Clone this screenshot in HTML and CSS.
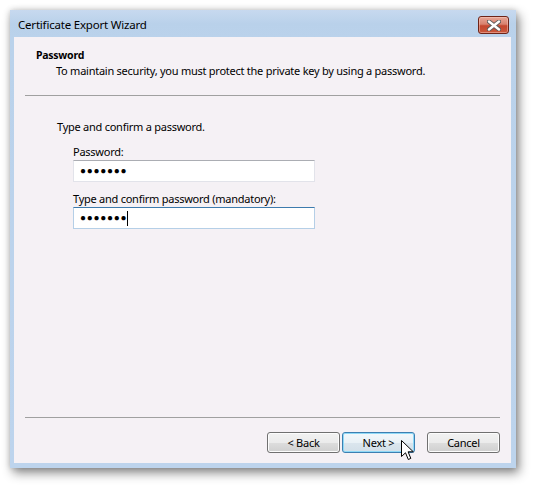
FILE: index.html
```html
<!DOCTYPE html>
<html lang="en">
<head>
<meta charset="utf-8">
<title>Certificate Export Wizard</title>
<link rel="stylesheet" href="styles.css">
</head>
<body>
<div class="window">
  <div class="titlebar">
    <span class="title">Certificate Export Wizard</span>
    <div class="close">
      <svg width="14" height="11" viewBox="0 0 14 11">
        <path d="M2 1.5 L12 9.5 M12 1.5 L2 9.5" stroke="#5b5b5b" stroke-width="4.2" stroke-linecap="round"/>
        <path d="M2 1.5 L12 9.5 M12 1.5 L2 9.5" stroke="#ffffff" stroke-width="2.4" stroke-linecap="round"/>
      </svg>
    </div>
  </div>
  <div class="client">
    <div class="header">
      <div class="head-title">Password</div>
      <div class="head-sub">To maintain security, you must protect the private key by using a password.</div>
    </div>
    <div class="sep"></div>
    <div class="body">
      <div class="intro">Type and confirm a password.</div>
      <div class="field">
        <div class="label">Password:</div>
        <div class="input"><span class="dots">●●●●●●●</span></div>
      </div>
      <div class="field">
        <div class="label">Type and confirm password (mandatory):</div>
        <div class="input focused"><span class="dots">●●●●●●●</span><span class="caret"></span></div>
      </div>
    </div>
    <div class="sep"></div>
    <div class="buttons">
      <div class="btn">&lt; Back</div>
      <div class="btn default">Next &gt;
        <svg class="cursor" width="13" height="21" viewBox="0 0 13 21">
          <path d="M0.5 0.5 L0.5 16.5 L4.5 12.8 L7.3 19.5 L9.8 18.4 L7.1 11.8 L12.3 11.8 Z" fill="#ffffff" stroke="#000000" stroke-width="1" stroke-linejoin="miter"/>
        </svg>
      </div>
      <div class="btn cancel">Cancel</div>
    </div>
  </div>
</div>
</body>
</html>
```

FILE: styles.css
```css
html, body {
  margin: 0;
  padding: 0;
  background: #ffffff;
}

body {
  width: 534px;
  height: 487px;
  overflow: hidden;
  font-family: "Segoe UI", "Noto Sans", "Open Sans", sans-serif;
  font-size: 11px;
  letter-spacing: -0.25px;
  line-height: 16px;
  color: #000000;
}

.window {
  margin: 10px 0 0 10px;
  width: 506px;
  height: 458px;
  box-sizing: border-box;
  display: flex;
  flex-direction: column;
  padding: 0 5px 5px 4px;
  background: linear-gradient(#c7d9ef 0px, #b9d1ea 14px, #bad2eb 27px, #bdd4ed 100%);
  box-shadow: 3px 5px 10px rgba(0, 0, 0, 0.45), 0 0 6px rgba(0, 0, 0, 0.18);
}

.titlebar {
  height: 27px;
  display: flex;
  align-items: flex-start;
  justify-content: space-between;
}

.title {
  margin: 7px 0 0 4px;
  line-height: 16px;
  font-size: 11.5px;
  letter-spacing: -0.2px;
}

.close {
  margin: 6px 2px 0 0;
  width: 31px;
  height: 18px;
  box-sizing: border-box;
  border: 1px solid #6e2418;
  border-radius: 3px;
  background: linear-gradient(#e7a696 0%, #d8826f 45%, #c4472f 55%, #c9573c 100%);
  box-shadow: inset 0 0 0 1px rgba(255, 210, 200, 0.45);
  display: flex;
  align-items: center;
  justify-content: center;
}

.close svg {
  display: block;
}

.client {
  flex: 1;
  background: #f5f1f5;
  display: flex;
  flex-direction: column;
}

.header {
  padding: 10px 0 0 22px;
  height: 58px;
  box-sizing: border-box;
}

.head-title {
  font-weight: bold;
  font-size: 10.5px;
}

.head-sub {
  padding-left: 20px;
}

.sep {
  margin: 0 11px;
  height: 1px;
  background: #a0a0a0;
}

.body {
  flex: 1;
  padding: 23px 0 0 43px;
}

.intro {
  margin-bottom: 9px;
}

.field {
  padding-left: 16px;
  margin-bottom: 9px;
}

.label {
  height: 16px;
}

.input {
  margin-top: 0;
  width: 242px;
  height: 22px;
  box-sizing: border-box;
  background: #ffffff;
  border: 1px solid #e2e3ea;
  border-top-color: #abadb3;
  display: flex;
  align-items: center;
  padding-left: 6px;
}

.input.focused {
  border-color: #b5cfe7;
  border-top-color: #3d7bad;
}

.dots {
  font-family: "Liberation Sans", sans-serif;
  font-size: 10px;
  letter-spacing: 0.7px;
  line-height: 14px;
}

.caret {
  width: 1px;
  height: 15px;
  background: #000000;
  margin-left: 0;
}

.buttons {
  height: 45px;
  box-sizing: border-box;
  padding: 14px 11px 0 0;
  display: flex;
  justify-content: flex-end;
}

.btn {
  position: relative;
  width: 73px;
  height: 21px;
  box-sizing: border-box;
  border: 1px solid #707070;
  border-radius: 3px;
  background: linear-gradient(#f2f2f2 0%, #ebebeb 50%, #dddddd 51%, #cfcfcf 100%);
  box-shadow: inset 0 0 0 1px #fcfcfc;
  display: flex;
  align-items: center;
  justify-content: center;
  margin-left: 2px;
}

.btn.default {
  border-color: #3c7fb1;
  box-shadow: inset 0 0 0 1px #8fd9f7;
  background: linear-gradient(#f3f8fb 0%, #e9f1f6 50%, #dbe6ee 51%, #d2dfe8 100%);
}

.btn.cancel {
  margin-left: 12px;
}

.cursor {
  position: absolute;
  left: 58px;
  top: 7px;
}
```
